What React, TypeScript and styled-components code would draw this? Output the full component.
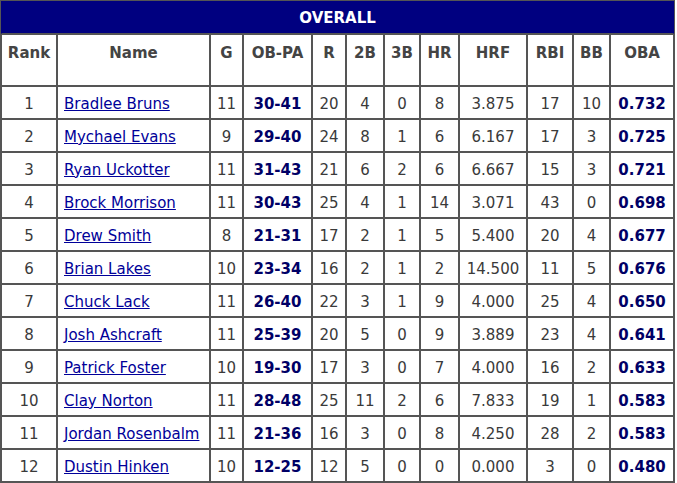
import React from 'react';
import styled, { createGlobalStyle } from 'styled-components';

type Player = {
  rank: number;
  name: string;
  g: number;
  obpa: string;
  r: number;
  b2: number;
  b3: number;
  hr: number;
  hrf: string;
  rbi: number;
  bb: number;
  oba: string;
};

const players: Player[] = [
  { rank: 1, name: 'Bradlee Bruns', g: 11, obpa: '30-41', r: 20, b2: 4, b3: 0, hr: 8, hrf: '3.875', rbi: 17, bb: 10, oba: '0.732' },
  { rank: 2, name: 'Mychael Evans', g: 9, obpa: '29-40', r: 24, b2: 8, b3: 1, hr: 6, hrf: '6.167', rbi: 17, bb: 3, oba: '0.725' },
  { rank: 3, name: 'Ryan Uckotter', g: 11, obpa: '31-43', r: 21, b2: 6, b3: 2, hr: 6, hrf: '6.667', rbi: 15, bb: 3, oba: '0.721' },
  { rank: 4, name: 'Brock Morrison', g: 11, obpa: '30-43', r: 25, b2: 4, b3: 1, hr: 14, hrf: '3.071', rbi: 43, bb: 0, oba: '0.698' },
  { rank: 5, name: 'Drew Smith', g: 8, obpa: '21-31', r: 17, b2: 2, b3: 1, hr: 5, hrf: '5.400', rbi: 20, bb: 4, oba: '0.677' },
  { rank: 6, name: 'Brian Lakes', g: 10, obpa: '23-34', r: 16, b2: 2, b3: 1, hr: 2, hrf: '14.500', rbi: 11, bb: 5, oba: '0.676' },
  { rank: 7, name: 'Chuck Lack', g: 11, obpa: '26-40', r: 22, b2: 3, b3: 1, hr: 9, hrf: '4.000', rbi: 25, bb: 4, oba: '0.650' },
  { rank: 8, name: 'Josh Ashcraft', g: 11, obpa: '25-39', r: 20, b2: 5, b3: 0, hr: 9, hrf: '3.889', rbi: 23, bb: 4, oba: '0.641' },
  { rank: 9, name: 'Patrick Foster', g: 10, obpa: '19-30', r: 17, b2: 3, b3: 0, hr: 7, hrf: '4.000', rbi: 16, bb: 2, oba: '0.633' },
  { rank: 10, name: 'Clay Norton', g: 11, obpa: '28-48', r: 25, b2: 11, b3: 2, hr: 6, hrf: '7.833', rbi: 19, bb: 1, oba: '0.583' },
  { rank: 11, name: 'Jordan Rosenbalm', g: 11, obpa: '21-36', r: 16, b2: 3, b3: 0, hr: 8, hrf: '4.250', rbi: 28, bb: 2, oba: '0.583' },
  { rank: 12, name: 'Dustin Hinken', g: 10, obpa: '12-25', r: 12, b2: 5, b3: 0, hr: 0, hrf: '0.000', rbi: 3, bb: 0, oba: '0.480' },
];

const columns = [
  { label: 'Rank', width: 56 },
  { label: 'Name', width: 153 },
  { label: 'G', width: 33 },
  { label: 'OB-PA', width: 69 },
  { label: 'R', width: 34 },
  { label: '2B', width: 38 },
  { label: '3B', width: 36 },
  { label: 'HR', width: 39 },
  { label: 'HRF', width: 68 },
  { label: 'RBI', width: 46 },
  { label: 'BB', width: 37 },
  { label: 'OBA', width: 64 },
];

const GlobalStyle = createGlobalStyle`
  body {
    margin: 0;
    background: #fff;
    font-family: 'DejaVu Sans', Verdana, sans-serif;
  }
`;

const Table = styled.table`
  width: 675px;
  table-layout: fixed;
  border-collapse: separate;
  border-spacing: 0;
  border: 1px solid #555;
  font-size: 15px;
  line-height: 18px;
  color: #333;
`;

const TitleCell = styled.th`
  height: 33px;
  box-sizing: border-box;
  padding: 1px 0 0;
  background: #000080;
  color: #fff;
  font-weight: bold;
  text-align: center;
  border: 1px solid #000080;
  border-bottom-color: #555;
`;

const HeadCell = styled.th`
  height: 52px;
  box-sizing: border-box;
  padding: 9px 0 0;
  vertical-align: top;
  text-align: center;
  font-weight: bold;
  color: #444;
  border: 1px solid #555;
`;

const Cell = styled.td<{ $left?: boolean; $strong?: boolean }>`
  height: 33px;
  box-sizing: border-box;
  padding: ${(p) => (p.$left ? '2px 0 0 6px' : '2px 0 0')};
  text-align: ${(p) => (p.$left ? 'left' : 'center')};
  vertical-align: middle;
  white-space: nowrap;
  border: 1px solid #555;
  font-weight: ${(p) => (p.$strong ? 'bold' : 'normal')};
  color: ${(p) => (p.$strong ? '#000066' : '#3a3a3a')};
`;

const PlayerLink = styled.a`
  color: #000099;
  text-decoration: underline;
`;

export default function App() {
  return (
    <>
      <GlobalStyle />
      <Table>
        <colgroup>
          {columns.map((c) => (
            <col key={c.label} style={{ width: c.width }} />
          ))}
        </colgroup>
        <thead>
          <tr>
            <TitleCell colSpan={columns.length}>OVERALL</TitleCell>
          </tr>
          <tr>
            {columns.map((c) => (
              <HeadCell key={c.label}>{c.label}</HeadCell>
            ))}
          </tr>
        </thead>
        <tbody>
          {players.map((p) => (
            <tr key={p.rank}>
              <Cell>{p.rank}</Cell>
              <Cell $left>
                <PlayerLink href="#">{p.name}</PlayerLink>
              </Cell>
              <Cell>{p.g}</Cell>
              <Cell $strong>{p.obpa}</Cell>
              <Cell>{p.r}</Cell>
              <Cell>{p.b2}</Cell>
              <Cell>{p.b3}</Cell>
              <Cell>{p.hr}</Cell>
              <Cell>{p.hrf}</Cell>
              <Cell>{p.rbi}</Cell>
              <Cell>{p.bb}</Cell>
              <Cell $strong>{p.oba}</Cell>
            </tr>
          ))}
        </tbody>
      </Table>
    </>
  );
}
